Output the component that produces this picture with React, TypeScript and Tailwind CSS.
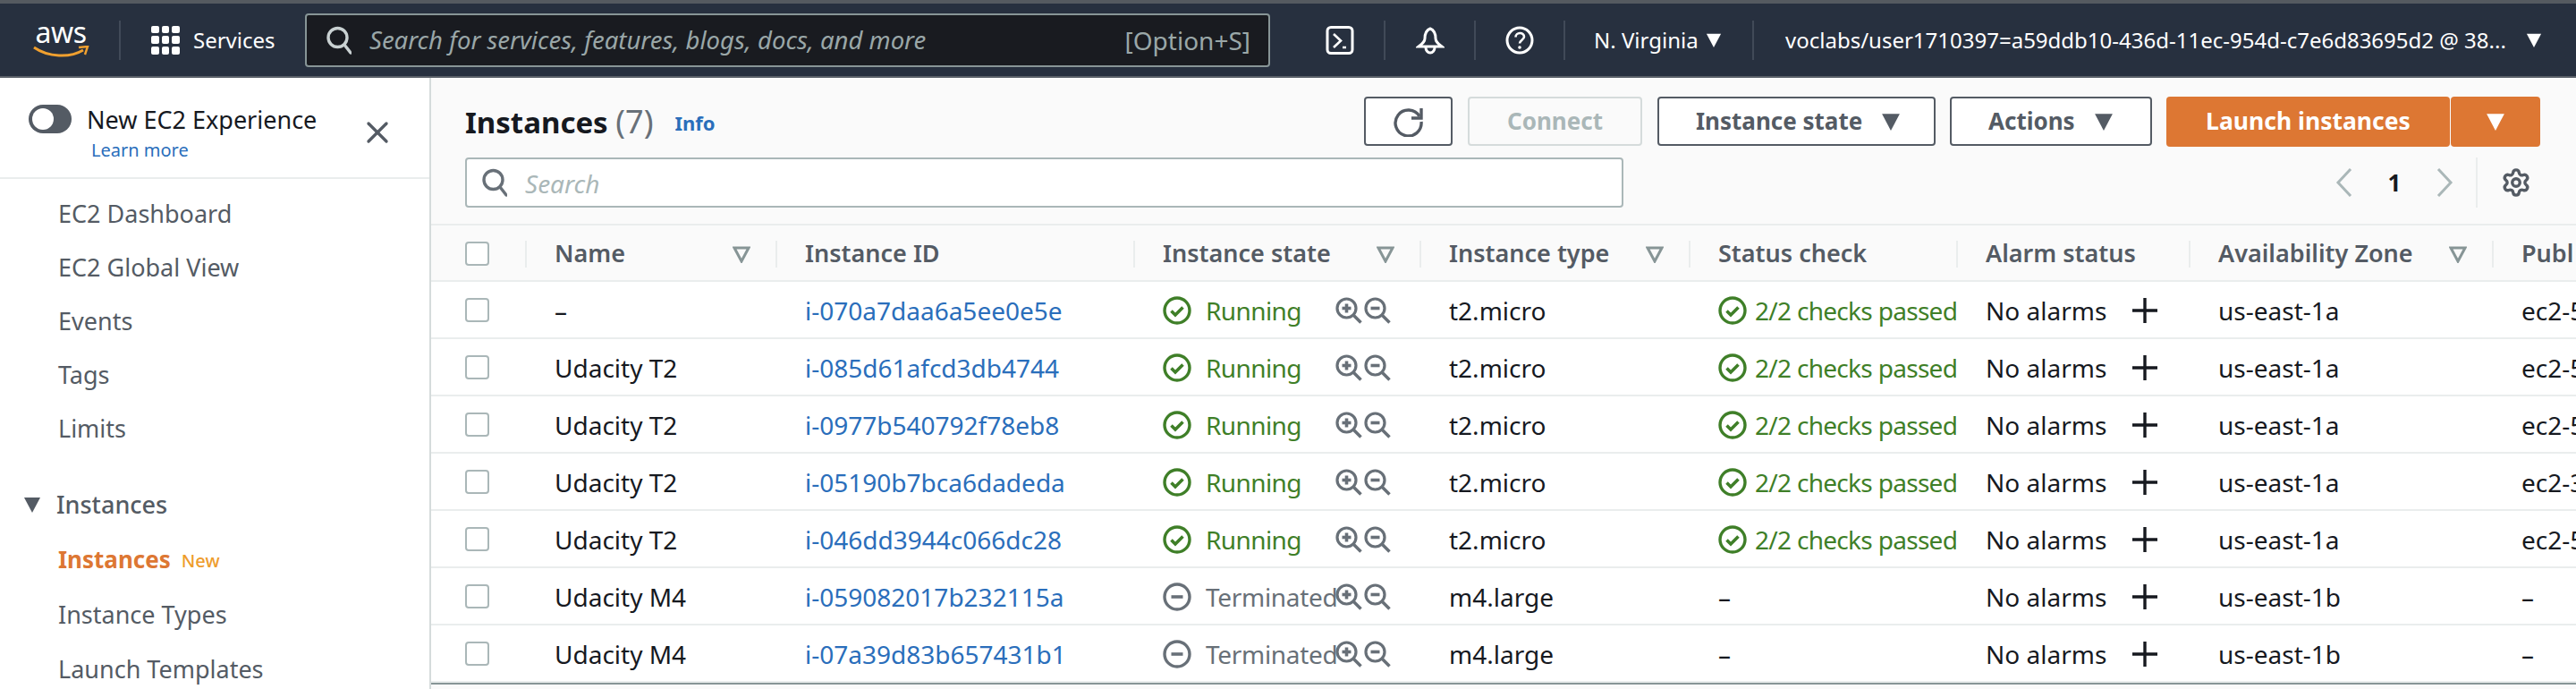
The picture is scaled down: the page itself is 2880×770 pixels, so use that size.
import { Settings, X } from 'lucide-react';

const gridCols = 'grid-cols-[105px_280px_400px_320px_301px_299px_260px_339px_1fr]';

type Instance = {
    name: string;
    id: string;
    state: 'Running' | 'Terminated';
    type: string;
    zone: string;
    dns: string;
};

const instances: Instance[] = [
    { name: '–', id: 'i-070a7daa6a5ee0e5e', state: 'Running', type: 't2.micro', zone: 'us-east-1a', dns: 'ec2-54-1' },
    { name: 'Udacity T2', id: 'i-085d61afcd3db4744', state: 'Running', type: 't2.micro', zone: 'us-east-1a', dns: 'ec2-52-1' },
    { name: 'Udacity T2', id: 'i-0977b540792f78eb8', state: 'Running', type: 't2.micro', zone: 'us-east-1a', dns: 'ec2-54-1' },
    { name: 'Udacity T2', id: 'i-05190b7bca6dadeda', state: 'Running', type: 't2.micro', zone: 'us-east-1a', dns: 'ec2-34-1' },
    { name: 'Udacity T2', id: 'i-046dd3944c066dc28', state: 'Running', type: 't2.micro', zone: 'us-east-1a', dns: 'ec2-54-1' },
    { name: 'Udacity M4', id: 'i-059082017b232115a', state: 'Terminated', type: 'm4.large', zone: 'us-east-1b', dns: '–' },
    { name: 'Udacity M4', id: 'i-07a39d83b657431b1', state: 'Terminated', type: 'm4.large', zone: 'us-east-1b', dns: '–' },
];

function Caret({ className }: { className: string }) {
    return (
        <svg viewBox="0 0 20 20" className={className}>
            <path d="M1 2h18L10 19z" fill="currentColor" />
        </svg>
    );
}

function FilterIcon() {
    return (
        <svg viewBox="0 0 20 20" className="w-5 h-5 shrink-0 text-[#879596]">
            <path d="M2 3h16l-8 15z" fill="none" stroke="currentColor" strokeWidth="3" />
        </svg>
    );
}

function SearchGlyph({ className }: { className: string }) {
    return (
        <svg viewBox="0 0 28 32" className={className} fill="none" stroke="currentColor" strokeWidth="3.4">
            <circle cx="12.5" cy="13" r="10.5" />
            <path d="M20 21l7 9" strokeLinecap="round" />
        </svg>
    );
}

function CheckCircle() {
    return (
        <svg viewBox="0 0 32 32" className="w-8 h-8 shrink-0 text-[#3f7f28]" fill="none" stroke="currentColor">
            <circle cx="16" cy="16" r="14" strokeWidth="3.4" />
            <path d="M9.5 16.5l4.5 4.5 8.5-8.5" strokeWidth="3.6" />
        </svg>
    );
}

function MinusCircle() {
    return (
        <svg viewBox="0 0 32 32" className="w-8 h-8 shrink-0 text-[#687078]" fill="none" stroke="currentColor">
            <circle cx="16" cy="16" r="14" strokeWidth="3.4" />
            <path d="M9.5 16h13" strokeWidth="3.6" />
        </svg>
    );
}

function ZoomIcon({ plus }: { plus?: boolean }) {
    return (
        <svg viewBox="0 0 30 30" className="w-[30px] h-[30px] shrink-0 text-[#687078]" fill="none" stroke="currentColor">
            <circle cx="12.5" cy="12.5" r="10.5" strokeWidth="3.2" />
            <path d="M20 20l8.5 8.5" strokeWidth="3.6" />
            <path d="M7.5 12.5h10" strokeWidth="3.6" />
            {plus && <path d="M12.5 7.5v10" strokeWidth="3.6" />}
        </svg>
    );
}

function PlusIcon() {
    return (
        <svg viewBox="0 0 30 30" className="w-[30px] h-[30px] shrink-0 text-[#16191f]" fill="none" stroke="currentColor" strokeWidth="3.4">
            <path d="M15 1v28M1 15h28" />
        </svg>
    );
}

function Checkbox() {
    return <div className="w-[27px] h-[27px] rounded-[4px] border-2 border-[#aab7b8] bg-white shrink-0" />;
}

function NavSep() {
    return <div className="w-[2px] h-[44px] bg-[#414a58] shrink-0" />;
}

function AwsLogo() {
    return (
        <div className="relative w-[64px] h-[40px] shrink-0">
            <span className="absolute left-[2px] top-[-9px] w-[60px] text-center text-[32px] leading-[40px] text-white tracking-[-0.5px]">aws</span>
            <svg viewBox="0 0 64 14" className="absolute left-0 bottom-0 w-[64px] h-[14px]" fill="none">
                <path d="M2 2c16 11 40 12 55 3" stroke="#f0a02f" strokeWidth="3" />
                <path d="M52 2l10-1-3 9" stroke="#f0a02f" strokeWidth="2.4" />
            </svg>
        </div>
    );
}

function GridIcon() {
    return (
        <div className="grid grid-cols-3 gap-[3px] w-[32px] h-[32px] shrink-0 mr-[15px]">
            {Array.from({ length: 9 }).map((_, i) => (
                <div key={i} className="bg-white rounded-[2px]" />
            ))}
        </div>
    );
}

function TopNav() {
    return (
        <div className="h-[87px] shrink-0 bg-[#27303f] border-t-4 border-b-2 border-t-[#555a60] border-b-[#5a6068] flex items-center pl-[36px] text-white">
            <AwsLogo />
            <div className="ml-[33px] mr-[34px]">
                <NavSep />
            </div>
            <GridIcon />
            <span className="text-[24px] w-[125px] shrink-0">Services</span>
            <div className="w-[1079px] h-[60px] shrink-0 rounded-[4px] border-2 border-[#879596] bg-[#191b20] flex items-center pl-[22px] pr-[20px] text-[#9aa7a8] text-[27.5px]">
                <SearchGlyph className="w-[28px] h-[32px] mr-[20px] text-[#c9d1d2]" />
                <span className="italic">Search for services, features, blogs, docs, and more</span>
                <span className="ml-auto text-[28px]">[Option+S]</span>
            </div>
            <svg viewBox="0 0 32 32" className="w-8 h-8 ml-[62px] shrink-0" fill="none" stroke="currentColor" strokeWidth="3">
                <rect x="2" y="1.5" width="28" height="29" rx="4" />
                <path d="M9 9l8 7.500-8 7.500M19 24h4" strokeWidth="2.6" />
            </svg>
            <div className="ml-[33px] mr-[34px]">
                <NavSep />
            </div>
            <svg viewBox="0 0 32 32" className="w-8 h-8 shrink-0" fill="none" stroke="currentColor" strokeWidth="3">
                <path d="M16 3c-5 2-6 7-6 11 0 4-3 6-7 9h26c-4-3-7-5-7-9 0-4-1-9-6-11z" />
                <path d="M11 24a5 6 0 0 0 10 0" />
            </svg>
            <div className="ml-[33px] mr-[33px]">
                <NavSep />
            </div>
            <svg viewBox="0 0 32 32" className="w-8 h-8 shrink-0" fill="none" stroke="currentColor" strokeWidth="3">
                <circle cx="16" cy="16" r="14" />
                <path d="M11.500 12.500c0-6 9.500-6 9.500-.5 0 3.500-5 4-5 7.500" strokeWidth="2.6" />
                <circle cx="16" cy="24" r="1.800" fill="currentColor" stroke="none" />
            </svg>
            <div className="ml-[33px] mr-[32px]">
                <NavSep />
            </div>
            <span className="text-[24px] w-[112px] shrink-0 whitespace-nowrap">N. Virginia</span>
            <Caret className="w-[18px] h-[18px] ml-[13px] shrink-0" />
            <div className="ml-[34px] mr-[35px]">
                <NavSep />
            </div>
            <span className="text-[24px] whitespace-nowrap">voclabs/user1710397=a59ddb10-436d-11ec-954d-c7e6d83695d2 @ 38...</span>
            <Caret className="w-[18px] h-[18px] ml-[22px] shrink-0" />
        </div>
    );
}

const sideItems = ['EC2 Dashboard', 'EC2 Global View', 'Events', 'Tags', 'Limits'];

function Sidebar() {
    return (
        <div className="w-[482px] shrink-0 bg-white border-r-2 border-[#d5dbdb] text-[#545b64] text-[27px] leading-[38px]">
            <div className="h-[113px] border-b-2 border-[#eaeded] flex pl-[32px] pt-[29px] relative">
                <div className="w-[48px] h-[32px] rounded-full bg-[#545b64] shrink-0 flex items-center pl-[4px] mt-[1px]">
                    <div className="w-[24px] h-[24px] rounded-full bg-white" />
                </div>
                <div className="ml-[17px] flex flex-col">
                    <span className="text-[#16191f] leading-[36px] whitespace-nowrap">New EC2 Experience</span>
                    <span className="text-[20px] leading-[30px] text-[#2a6ebb] ml-[5px] mt-[1px]">Learn more</span>
                </div>
                <X className="absolute left-[402px] top-[41px] w-[40px] h-[40px] text-[#545b64]" strokeWidth={2} />
            </div>
            <div className="flex flex-col pl-[65px] pt-[9px]">
                {sideItems.map((item) => (
                    <div key={item} className="h-[60px] flex items-center">
                        {item}
                    </div>
                ))}
                <div className="h-[60px] mt-[25px] -ml-[39px] flex items-center font-medium">
                    <Caret className="w-[20px] h-[20px] mr-[17px]" />
                    Instances
                </div>
                <div className="h-[62px] flex items-center">
                    <span className="font-bold text-[26px] text-[#dd7733]">Instances</span>
                    <span className="ml-[12px] text-[20px] font-medium text-[#ee9c2c] mt-[4px]">New</span>
                </div>
                <div className="h-[62px] flex items-center">Instance Types</div>
                <div className="h-[60px] flex items-center">Launch Templates</div>
            </div>
        </div>
    );
}

function Button({ label, className }: { label: string; className: string }) {
    return (
        <div className={`h-[55px] shrink-0 rounded-[4px] border-2 flex items-center justify-center font-bold text-[26px] ${className}`}>
            {label}
        </div>
    );
}

function Toolbar() {
    return (
        <div className="h-[165px] shrink-0 pl-[38px] pr-[40px] pt-[21px] border-b-2 border-[#eaeded]">
            <div className="flex items-center h-[55px]">
                <div className="text-[33px] font-bold text-[#16191f] whitespace-nowrap">
                    Instances <span className="text-[36px] font-normal text-[#687078]">(7)</span>
                </div>
                <span className="text-[22px] font-bold text-[#2a6ebb] ml-[24px] mt-[4px]">Info</span>
                <div className="ml-auto flex items-center">
                    <div className="h-[55px] w-[99px] rounded-[4px] border-2 border-[#545b64] bg-white flex items-center justify-center mr-[17px]">
                        <svg viewBox="0 0 34 34" className="w-[34px] h-[34px] text-[#545b64]" fill="none" stroke="currentColor" strokeWidth="3.4">
                            <path d="M29 11A14.500 14.500 0 1 0 31 17" />
                            <path d="M31 2v11H20" strokeWidth="3.4" />
                        </svg>
                    </div>
                    <Button label="Connect" className="w-[195px] border-[#d5dbdb] text-[#aab7b8] bg-[#fafafa] mr-[17px]" />
                    <div className="w-[311px] h-[55px] rounded-[4px] border-2 border-[#545b64] bg-white flex items-center pl-[41px] font-bold text-[26px] text-[#545b64] mr-[16px]">
                        Instance state
                        <Caret className="w-[22px] h-[22px] ml-[21px]" />
                    </div>
                    <div className="w-[226px] h-[55px] rounded-[4px] border-2 border-[#545b64] bg-white flex items-center pl-[41px] font-bold text-[26px] text-[#545b64] mr-[16px]">
                        Actions
                        <Caret className="w-[22px] h-[22px] ml-[21px]" />
                    </div>
                    <div className="w-[317px] h-[56px] rounded-[4px] bg-[#dd7733] flex items-center justify-center font-bold text-[26.5px] text-white">
                        Launch instances
                    </div>
                    <div className="w-[100px] h-[56px] rounded-[4px] bg-[#dd7733] flex items-center justify-center ml-[1px] text-white">
                        <Caret className="w-[22px] h-[22px]" />
                    </div>
                </div>
            </div>
            <div className="flex items-center mt-[13px]">
                <div className="w-[1295px] h-[56px] rounded-[4px] border-2 border-[#aab7b8] bg-white flex items-center pl-[17px] text-[28px] italic text-[#aab7b8]">
                    <SearchGlyph className="w-[28px] h-[32px] mr-[20px] text-[#687078]" />
                    <span className="mt-[2px]">Search</span>
                </div>
                <div className="ml-auto flex items-center h-[56px] pr-[10px]">
                    <svg viewBox="0 0 20 32" className="w-[20px] h-[32px] text-[#aab7b8]" fill="none" stroke="currentColor" strokeWidth="3">
                        <path d="M17 1L3 16l14 15" />
                    </svg>
                    <span className="w-[92px] text-center font-bold text-[26px] text-[#16191f]">1</span>
                    <svg viewBox="0 0 20 32" className="w-[20px] h-[32px] text-[#aab7b8]" fill="none" stroke="currentColor" strokeWidth="3">
                        <path d="M3 1l14 15L3 31" />
                    </svg>
                    <div className="w-[2px] h-[56px] bg-[#eaeded] ml-[25px] mr-[26px]" />
                    <Settings className="w-[34px] h-[34px] text-[#545b64]" strokeWidth={2.4} />
                </div>
            </div>
        </div>
    );
}

function HeadCell({ label, filter }: { label: string; filter?: boolean }) {
    return (
        <div className="flex items-center">
            <div className="flex items-center w-full h-[30px] border-l-2 border-[#eaeded] pl-[31px] pr-[28px] whitespace-nowrap">
                {label}
                {filter && (
                    <div className="ml-auto">
                        <FilterIcon />
                    </div>
                )}
            </div>
        </div>
    );
}

function Row({ item }: { item: Instance }) {
    const running = item.state === 'Running';
    return (
        <div className={`grid ${gridCols} h-[64px] shrink-0 bg-white border-b-2 border-[#eaeded] text-[28px] text-[#16191f] whitespace-nowrap pt-[1px]`}>
            <div className="pl-[38px] flex items-center">
                <Checkbox />
            </div>
            <div className="pl-[33px] flex items-center">{item.name}</div>
            <div className="pl-[33px] flex items-center text-[#2a6ebb]">{item.id}</div>
            <div className="pl-[33px] flex items-center">
                {running ? <CheckCircle /> : <MinusCircle />}
                <span className={`ml-[16px] w-[145px] shrink-0 ${running ? 'text-[#3f7f28] tracking-[-0.6px]' : 'text-[#687078] tracking-[-0.3px]'}`}>{item.state}</span>
                <ZoomIcon plus />
                <div className="ml-[2px]">
                    <ZoomIcon />
                </div>
            </div>
            <div className="pl-[33px] flex items-center">{item.type}</div>
            <div className="pl-[33px] flex items-center overflow-hidden">
                {running ? (
                    <>
                        <CheckCircle />
                        <span className="ml-[9px] text-[#3f7f28] tracking-[-0.7px]">2/2 checks passed</span>
                    </>
                ) : (
                    '–'
                )}
            </div>
            <div className="pl-[33px] flex items-center">
                <span className="w-[163px] shrink-0">No alarms</span>
                <PlusIcon />
            </div>
            <div className="pl-[33px] flex items-center">{item.zone}</div>
            <div className="pl-[33px] flex items-center overflow-hidden">{item.dns}</div>
        </div>
    );
}

function InstanceTable() {
    return (
        <div className="flex flex-col">
            <div className={`grid ${gridCols} h-[63px] shrink-0 border-b-2 border-[#eaeded] pt-[2px] font-semibold text-[27px] text-[#545b64]`}>
                <div className="pl-[38px] flex items-center">
                    <Checkbox />
                </div>
                <HeadCell label="Name" filter />
                <HeadCell label="Instance ID" />
                <HeadCell label="Instance state" filter />
                <HeadCell label="Instance type" filter />
                <HeadCell label="Status check" />
                <HeadCell label="Alarm status" />
                <HeadCell label="Availability Zone" filter />
                <HeadCell label="Publ" />
            </div>
            {instances.map((item) => (
                <Row key={item.id} item={item} />
            ))}
            <div className="h-[2px] bg-[#879596]" />
        </div>
    );
}

export default function App() {
    return (
        <div className="w-[2880px] h-[770px] overflow-hidden flex flex-col bg-white font-['Noto_Sans',sans-serif]">
            <TopNav />
            <div className="flex flex-1 min-h-0">
                <Sidebar />
                <div className="flex-1 min-w-0 bg-[#fafafa] flex flex-col">
                    <Toolbar />
                    <InstanceTable />
                </div>
            </div>
        </div>
    );
}
